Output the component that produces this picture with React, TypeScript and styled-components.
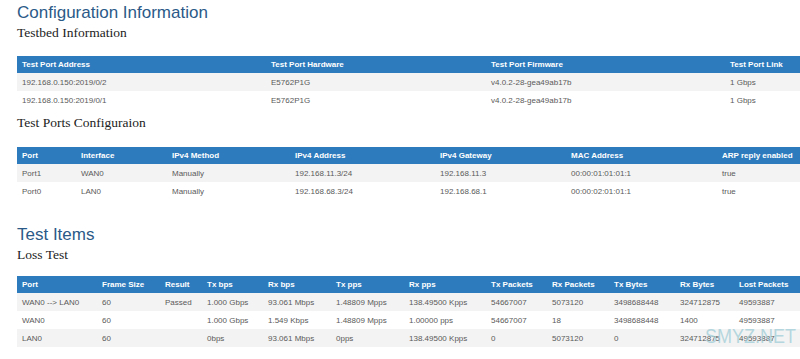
import type { FC } from "react";
import { styled, createGlobalStyle } from "styled-components";

const GlobalStyle = createGlobalStyle`
    html, body {
        margin: 0;
        padding: 0;
        background: #ffffff;
        overflow: hidden;
    }
`;

const Page = styled.div`
    position: relative;
    width: 800px;
    height: 359px;
    padding-left: 17px;
    box-sizing: border-box;
    font-family: "Liberation Sans", Arial, sans-serif;
`;

const Title = styled.h1<{ $top: number }>`
    margin: ${(p) => p.$top}px 0 0;
    padding-top: 2px;
    font-size: 17px;
    line-height: 22px;
    font-weight: normal;
    color: #2b5a88;
`;

const SubTitle = styled.h2<{ $top?: number; $bottom: number }>`
    margin: ${(p) => p.$top ?? 0}px 0 ${(p) => p.$bottom}px;
    font-family: "Liberation Serif", "Times New Roman", serif;
    font-size: 13.5px;
    line-height: 18px;
    font-weight: normal;
    color: #222222;
`;

const Table = styled.table`
    width: 783px;
    border-collapse: collapse;
    table-layout: fixed;
    font-size: 8px;
`;

const HeadCell = styled.th`
    background: #2d7bbd;
    color: #ffffff;
    font-weight: bold;
    text-align: left;
    height: 17px;
    padding: 0 5px;
    white-space: nowrap;
    overflow: hidden;
`;

const Row = styled.tr<{ $striped: boolean }>`
    background: ${(p) => (p.$striped ? "#f3f3f3" : "#ffffff")};
`;

const Cell = styled.td`
    color: #5a5a5a;
    height: 18px;
    padding: 0 5px;
    white-space: nowrap;
    overflow: hidden;
`;

const Watermark = styled.div`
    position: absolute;
    left: 705px;
    top: 325px;
    font-size: 18px;
    line-height: 20px;
    transform: scaleY(1.15);
    transform-origin: top left;
    color: rgba(160, 205, 215, 0.75);
    pointer-events: none;
`;

interface DataTableProps {
    widths: number[];
    headers: string[];
    rows: string[][];
}

const DataTable: FC<DataTableProps> = ({ widths, headers, rows }) => (
    <Table>
        <colgroup>
            {widths.map((w, i) => (
                <col key={i} style={{ width: w }} />
            ))}
            <col />
        </colgroup>
        <thead>
            <tr>
                {headers.map((h) => (
                    <HeadCell key={h}>{h}</HeadCell>
                ))}
            </tr>
        </thead>
        <tbody>
            {rows.map((r, i) => (
                <Row key={i} $striped={i % 2 === 0}>
                    {r.map((c, j) => (
                        <Cell key={j}>{c}</Cell>
                    ))}
                </Row>
            ))}
        </tbody>
    </Table>
);

const App: FC = () => (
    <Page>
        <GlobalStyle />
        <Title $top={0}>Configuration Information</Title>
        <SubTitle $bottom={14}>Testbed Information</SubTitle>
        <DataTable
            widths={[249, 220, 239]}
            headers={["Test Port Address", "Test Port Hardware", "Test Port Firmware", "Test Port Link"]}
            rows={[
                ["192.168.0.150:2019/0/2", "E5762P1G", "v4.0.2-28-gea49ab17b", "1 Gbps"],
                ["192.168.0.150:2019/0/1", "E5762P1G", "v4.0.2-28-gea49ab17b", "1 Gbps"],
            ]}
        />
        <SubTitle $top={5} $bottom={15}>Test Ports Configuraion</SubTitle>
        <DataTable
            widths={[59, 91, 123, 145, 131, 151]}
            headers={["Port", "Interface", "IPv4 Method", "IPv4 Address", "IPv4 Gateway", "MAC Address", "ARP reply enabled"]}
            rows={[
                ["Port1", "WAN0", "Manually", "192.168.11.3/24", "192.168.11.3", "00:00:01:01:01:1", "true"],
                ["Port0", "LAN0", "Manually", "192.168.68.3/24", "192.168.68.1", "00:00:02:01:01:1", "true"],
            ]}
        />
        <Title $top={22}>Test Items</Title>
        <SubTitle $bottom={12}>Loss Test</SubTitle>
        <DataTable
            widths={[80, 63, 42, 61, 68, 73, 82, 61, 62, 66, 59]}
            headers={["Port", "Frame Size", "Result", "Tx bps", "Rx bps", "Tx pps", "Rx pps", "Tx Packets", "Rx Packets", "Tx Bytes", "Rx Bytes", "Lost Packets"]}
            rows={[
                ["WAN0 --> LAN0", "60", "Passed", "1.000 Gbps", "93.061 Mbps", "1.48809 Mpps", "138.49500 Kpps", "54667007", "5073120", "3498688448", "324712875", "49593887"],
                ["WAN0", "60", "", "1.000 Gbps", "1.549 Kbps", "1.48809 Mpps", "1.00000 pps", "54667007", "18", "3498688448", "1400", "49593887"],
                ["LAN0", "60", "", "0bps", "93.061 Mbps", "0pps", "138.49500 Kpps", "0", "5073120", "0", "324712875", "49593887"],
            ]}
        />
        <Watermark>SMYZ.NET</Watermark>
    </Page>
);

export default App;
